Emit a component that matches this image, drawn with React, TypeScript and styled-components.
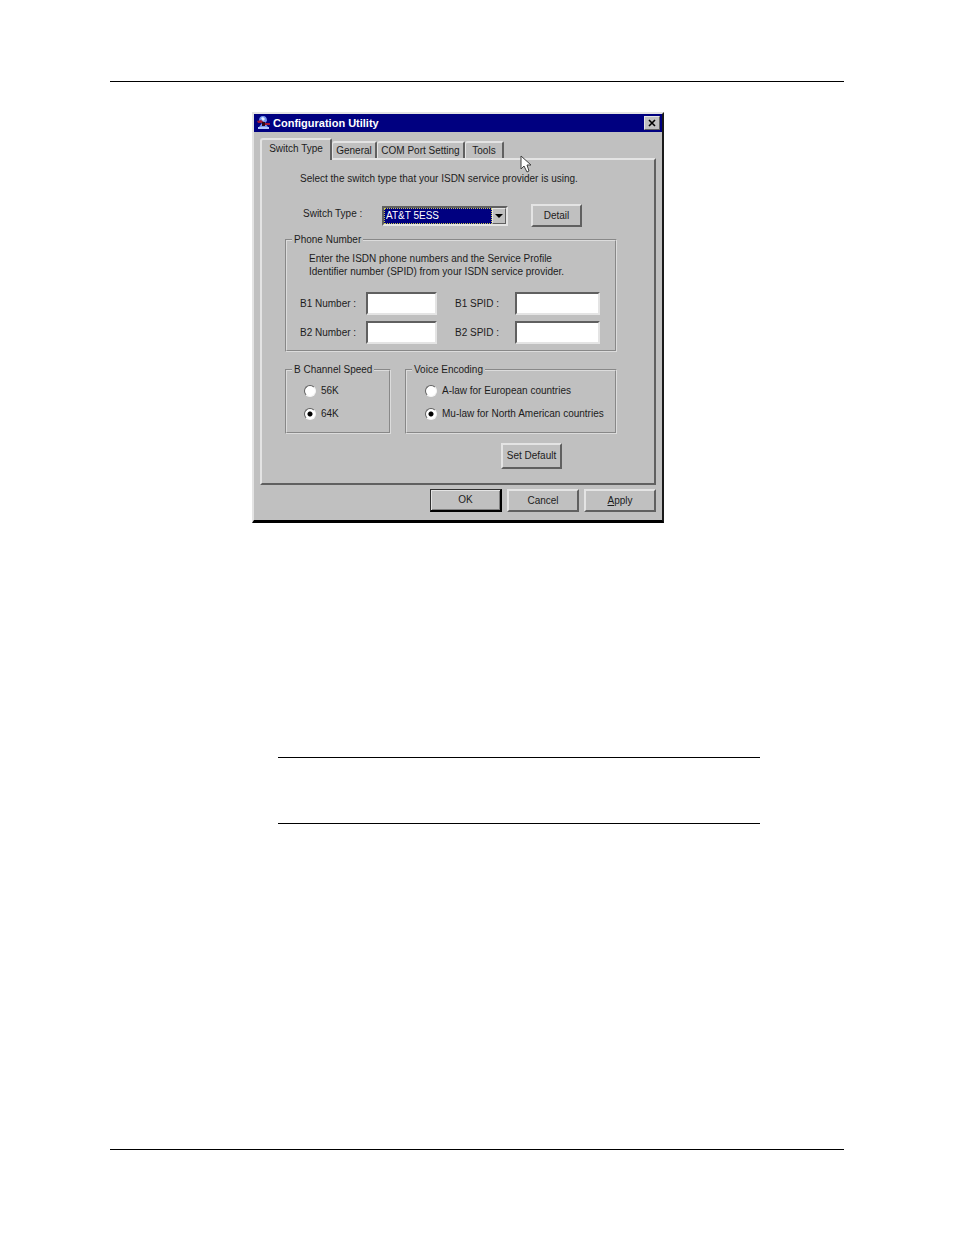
import React from "react";
import styled, { createGlobalStyle, css } from "styled-components";

const face = "#c0c0c0";
const light = "#e4e4e4";
const shadow = "#606060";
const navy = "#000080";

const GlobalStyle = createGlobalStyle`
  *, *::before, *::after { box-sizing: border-box; }
  body {
    margin: 0;
    background: #fff;
    color: #1c1c1c;
    font: 10px/14px "Liberation Sans", Arial, sans-serif;
  }
  button, input, select { font: inherit; color: inherit; }
`;

const raised = css`
  border: 2px solid;
  border-color: ${light} ${shadow} ${shadow} ${light};
`;

const sunken = css`
  border: 2px solid;
  border-color: ${shadow} ${light} ${light} ${shadow};
`;

const Page = styled.main`
  padding: 81px 110px 85px;
`;

const Rule = styled.hr`
  margin: 0;
  border: 0;
  height: 1px;
  background: #000;
`;

const Figure = styled.section`
  padding: 30px 0 234px 142px;
`;

const Note = styled.aside`
  margin: 0 84px 325px 168px;
  height: 67px;
  border: solid #000;
  border-width: 1px 0;
`;

const Dialog = styled.form`
  position: relative;
  width: 412px;
  background: ${face};
  border: solid;
  border-width: 2px 2px 3px;
  border-color: ${light} #1a1a1a #000 ${light};
`;

const TitleBar = styled.header`
  display: flex;
  align-items: center;
  gap: 2px;
  height: 18px;
  padding: 0 2px 0 3px;
  background: ${navy};
  color: #fff;
`;

const Title = styled.h1`
  flex: 1;
  margin: 0;
  font-size: 11px;
  line-height: 14px;
`;

const CloseButton = styled.button`
  ${raised}
  border-width: 1px;
  display: flex;
  align-items: center;
  justify-content: center;
  width: 16px;
  height: 14px;
  padding: 0;
  background: ${face};
`;

const Body = styled.div`
  padding: 6px 6px 8px;
`;

const Tabs = styled.div`
  display: flex;
  align-items: flex-end;
  height: 20px;
`;

const Tab = styled.button<{ $width: number; $active?: boolean }>`
  width: ${(p) => p.$width}px;
  height: ${(p) => (p.$active ? 22 : 17)}px;
  margin-bottom: ${(p) => (p.$active ? -2 : 0)}px;
  z-index: ${(p) => (p.$active ? 1 : 0)};
  padding: 0 0 ${(p) => (p.$active ? 3 : 0)}px;
  border: solid;
  border-width: 2px 2px 0 ${(p) => (p.$active ? 2 : 1)}px;
  border-color: ${light} ${shadow} ${face} ${light};
  border-radius: 3px 2px 0 0;
  background: ${face};
  line-height: 14px;
  white-space: nowrap;
`;

const Panel = styled.div`
  ${raised}
  padding: 12px 37px 14px 23px;
`;

const Intro = styled.p`
  margin: 0 0 18px 15px;
  white-space: nowrap;
`;

const SwitchRow = styled.div`
  display: flex;
  align-items: center;
  height: 23px;
  margin-bottom: 7px;
  padding-left: 18px;
`;

const SwitchLabel = styled.label`
  width: 79px;
  padding-bottom: 4px;
`;

const SelectBox = styled.div`
  ${sunken}
  display: flex;
  position: relative;
  width: 126px;
  height: 20px;
  margin-right: 23px;
`;

const Select = styled.select`
  appearance: none;
  flex: 1;
  border: 1px dotted #c8c850;
  border-radius: 0;
  margin-right: 14px;
  padding: 0 1px;
  background: ${navy};
  color: #fff;
  line-height: 14px;
`;

const SelectArrow = styled.span`
  ${raised}
  border-width: 1px;
  position: absolute;
  top: 0;
  right: 0;
  display: flex;
  align-items: center;
  justify-content: center;
  width: 14px;
  height: 16px;
  background: ${face};
  pointer-events: none;
`;

const Button = styled.button<{ $width: number; $tall?: boolean; $primary?: boolean }>`
  ${raised}
  width: ${(p) => p.$width}px;
  height: ${(p) => (p.$tall ? 26 : 23)}px;
  padding: 0;
  background: ${face};
  white-space: nowrap;
  ${(p) =>
    p.$primary &&
    css`
      border-width: 1px 2px 2px 1px;
      border-color: #303030 #000 #000 #303030;
      box-shadow: inset 1px 1px ${light}, inset -1px -1px #808080;
    `}
`;

const Group = styled.fieldset<{ $width?: number }>`
  width: ${(p) => (p.$width ? `${p.$width}px` : "auto")};
  min-width: 0;
  margin: 0;
  padding: 0;
  border: 2px groove #dcdcdc;
`;

const Legend = styled.legend`
  margin-left: 5px;
  padding: 0 2px;
  line-height: 12px;
  white-space: nowrap;
`;

const Hint = styled.p`
  margin: 0;
  padding: 6px 0 14px 22px;
  line-height: 13px;
  white-space: nowrap;
`;

const Fields = styled.div`
  display: grid;
  grid-template-columns: 66px 89px 60px 85px;
  row-gap: 6px;
  align-items: center;
  padding: 0 0 6px 13px;
`;

const FieldLabel = styled.label`
  white-space: nowrap;
`;

const TextBox = styled.input<{ $width: number }>`
  ${sunken}
  width: ${(p) => p.$width}px;
  height: 23px;
  padding: 0 2px;
  border-radius: 0;
  background: #fff;
`;

const Groups = styled.div`
  display: flex;
  gap: 14px;
  margin: 12px 0 9px;
`;

const Options = styled.div<{ $indent: number }>`
  padding: 3px 0 7px ${(p) => p.$indent}px;
`;

const Option = styled.label`
  display: flex;
  align-items: center;
  gap: 5px;
  height: 23px;
  white-space: nowrap;
`;

const Radio = styled.input`
  appearance: none;
  flex: none;
  width: 12px;
  height: 12px;
  margin: 0;
  border: 1px solid;
  border-color: ${shadow} #f4f4f4 #f4f4f4 ${shadow};
  border-radius: 50%;
  background: #fff;
  &:checked {
    background: radial-gradient(circle, #000 0 2px, #fff 3px);
  }
`;

const DefaultRow = styled.div`
  display: flex;
  justify-content: flex-end;
  padding-right: 55px;
`;

const Actions = styled.footer`
  display: flex;
  justify-content: flex-end;
  gap: 5px;
  padding-top: 4px;
`;

const Pointer = styled.svg`
  position: absolute;
  left: 266px;
  top: 41px;
  z-index: 2;
`;

function AppIcon() {
  return (
    <svg width="14" height="16" viewBox="0 0 14 16" aria-hidden="true">
      <path d="M2 6Q2 1 6 1Q10 1 10 6L8 8L11 12H2L5 8Z" fill="#7898f0" />
      <path d="M4 3L6 2L8 4L6 6Z" fill="#e8f0ff" />
      <path d="M1 12H12V14H1Z" fill="#b4c8ff" />
      <path d="M0 6L4 5L8 8L13 8V10L8 10L5 8L1 8Z" fill="#a01838" />
      <path d="M5 7H8V11H5Z" fill="#300818" />
    </svg>
  );
}

export default function App() {
  return (
    <>
      <GlobalStyle />
      <Page>
        <Rule />
        <Figure>
          <Dialog onSubmit={(e) => e.preventDefault()}>
            <TitleBar>
              <AppIcon />
              <Title>Configuration Utility</Title>
              <CloseButton type="button" aria-label="Close">
                <svg width="8" height="8" viewBox="0 0 8 8">
                  <path d="M1 1L7 7M7 1L1 7" stroke="#000" strokeWidth="1.600" />
                </svg>
              </CloseButton>
            </TitleBar>
            <Body>
              <Tabs role="tablist">
                <Tab type="button" role="tab" aria-selected="true" $width={72} $active>
                  Switch Type
                </Tab>
                <Tab type="button" role="tab" $width={45}>General</Tab>
                <Tab type="button" role="tab" $width={88}>COM Port Setting</Tab>
                <Tab type="button" role="tab" $width={39}>Tools</Tab>
              </Tabs>
              <Panel role="tabpanel">
                <Intro>Select the switch type that your ISDN service provider is using.</Intro>
                <SwitchRow>
                  <SwitchLabel htmlFor="switch-type">Switch Type :</SwitchLabel>
                  <SelectBox>
                    <Select id="switch-type" defaultValue="att">
                      <option value="att">AT&amp;T 5ESS</option>
                    </Select>
                    <SelectArrow>
                      <svg width="8" height="4" viewBox="0 0 8 4">
                        <path d="M0 0H8L4 4Z" fill="#000" />
                      </svg>
                    </SelectArrow>
                  </SelectBox>
                  <Button type="button" $width={51}>Detail</Button>
                </SwitchRow>
                <Group>
                  <Legend>Phone Number</Legend>
                  <Hint>
                    Enter the ISDN phone numbers and the Service Profile
                    <br />
                    Identifier number (SPID) from your ISDN service provider.
                  </Hint>
                  <Fields>
                    <FieldLabel htmlFor="b1-number">B1 Number :</FieldLabel>
                    <TextBox id="b1-number" $width={71} />
                    <FieldLabel htmlFor="b1-spid">B1 SPID :</FieldLabel>
                    <TextBox id="b1-spid" $width={85} />
                    <FieldLabel htmlFor="b2-number">B2 Number :</FieldLabel>
                    <TextBox id="b2-number" $width={71} />
                    <FieldLabel htmlFor="b2-spid">B2 SPID :</FieldLabel>
                    <TextBox id="b2-spid" $width={85} />
                  </Fields>
                </Group>
                <Groups>
                  <Group $width={106}>
                    <Legend>B Channel Speed</Legend>
                    <Options $indent={17}>
                      <Option><Radio type="radio" name="speed" />56K</Option>
                      <Option><Radio type="radio" name="speed" defaultChecked />64K</Option>
                    </Options>
                  </Group>
                  <Group $width={212}>
                    <Legend>Voice Encoding</Legend>
                    <Options $indent={18}>
                      <Option><Radio type="radio" name="encoding" />A-law for European countries</Option>
                      <Option><Radio type="radio" name="encoding" defaultChecked />Mu-law for North American countries</Option>
                    </Options>
                  </Group>
                </Groups>
                <DefaultRow>
                  <Button type="button" $width={61} $tall>Set Default</Button>
                </DefaultRow>
              </Panel>
              <Actions>
                <Button type="submit" $width={72} $primary>OK</Button>
                <Button type="button" $width={72}>Cancel</Button>
                <Button type="button" $width={72}><u>A</u>pply</Button>
              </Actions>
            </Body>
            <Pointer width="13" height="19" viewBox="0 0 13 19" aria-hidden="true">
              <path d="M1 1V14L4 11L7 17L9 16L7 10H11Z" fill="#fff" stroke="#404040" />
            </Pointer>
          </Dialog>
        </Figure>
        <Note />
        <Rule />
      </Page>
    </>
  );
}
